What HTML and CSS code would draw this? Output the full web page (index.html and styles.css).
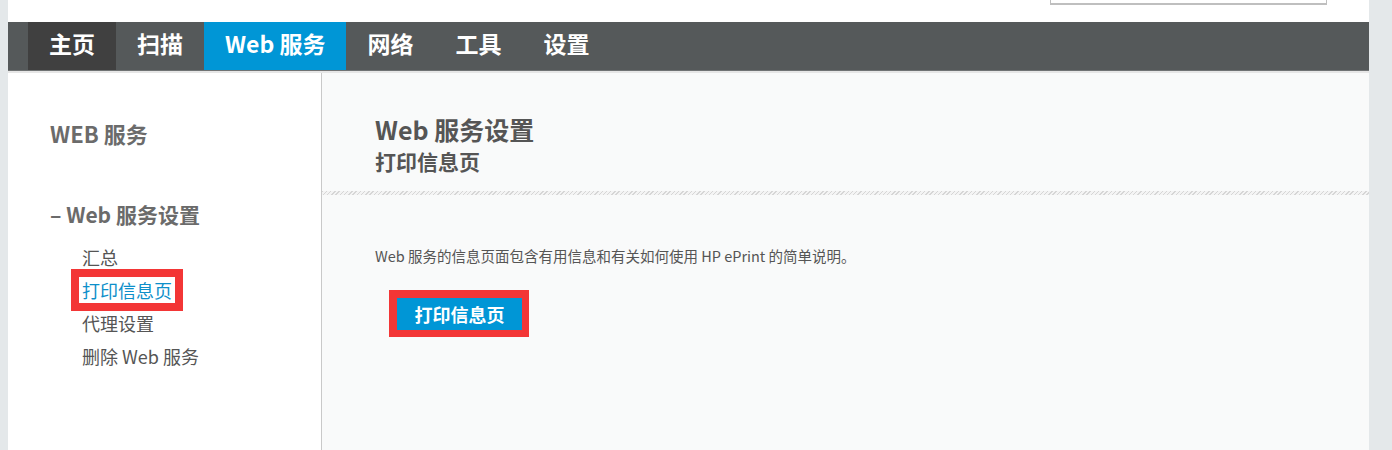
FILE: index.html
```html
<!DOCTYPE html>
<html lang="zh-CN">
<head>
  <meta charset="UTF-8">
  <title>Web 服务 - 打印信息页</title>
  <link rel="stylesheet" href="styles.css">
</head>
<body>
  <div class="page">
    <div class="topbar">
      <div class="search"></div>
    </div>

    <ul class="nav">
      <li class="nav-home">主页</li>
      <li>扫描</li>
      <li class="active">Web 服务</li>
      <li>网络</li>
      <li>工具</li>
      <li>设置</li>
    </ul>

    <div class="content">
      <div class="sidebar">
        <h2>WEB 服务</h2>
        <h3>– Web 服务设置</h3>
        <ul class="subnav">
          <li>汇总</li>
          <li><span class="current marked">打印信息页</span></li>
          <li>代理设置</li>
          <li>删除 Web 服务</li>
        </ul>
      </div>

      <div class="main">
        <div class="main-header">
          <h1>Web 服务设置</h1>
          <h4>打印信息页</h4>
        </div>
        <div class="divider"></div>
        <div class="main-body">
          <p>Web 服务的信息页面包含有用信息和有关如何使用 HP ePrint 的简单说明。</p>
          <div class="btn-mark">
            <button>打印信息页</button>
          </div>
        </div>
      </div>
    </div>
  </div>
</body>
</html>
```

FILE: styles.css
```css
body {
  margin: 0;
  background: #e4e8ea;
  font-family: "Noto Sans CJK SC", sans-serif;
  color: #555;
}
.page {
  width: 1361px;
  margin-left: 8px;
  height: 450px;
  background: #f9fafa;
  display: flex;
  flex-direction: column;
}
.topbar {
  height: 22px;
  background: #fff;
  display: flex;
  justify-content: flex-end;
  align-items: flex-end;
  overflow: hidden;
}
.search {
  width: 275px;
  height: 30px;
  margin: 0 42px 17px 0;
  border: 1px solid #bfbfbf;
  border-bottom-width: 2px;
  flex-shrink: 0;
}
.nav {
  list-style: none;
  margin: 0;
  padding: 0 0 0 20px;
  display: flex;
  height: 48px;
  background: #55595a;
  border-bottom: 1px solid #707374;
  box-shadow: 0 2px 0 #e6e6e6;
}
.nav li {
  padding: 0 21px 6px;
  line-height: 42px;
  font-size: 23px;
  font-weight: bold;
  color: #fff;
}
.nav .nav-home {
  background: #404040;
}
.nav .active {
  background: #0096d6;
}
.content {
  flex: 1;
  display: flex;
  margin-top: 2px;
}
.sidebar {
  width: 314px;
  background: #fff;
  border-right: 1px solid #c9c9c9;
  padding: 45px 0 0 42px;
  box-sizing: border-box;
}
.sidebar h2 {
  margin: 0;
  font-size: 22px;
  line-height: 30px;
  color: #6b6b6b;
}
.sidebar h3 {
  margin: 51px 0 0;
  font-size: 21px;
  line-height: 30px;
  color: #6b6b6b;
}
.subnav {
  list-style: none;
  margin: 12px 0 0;
  padding: 0 0 0 32px;
}
.subnav li {
  font-size: 18px;
  line-height: 33px;
  color: #555;
}
.subnav .current {
  color: #0d8fca;
}
.marked {
  border: 8px solid #f33636;
  padding: 0 3px;
  margin-left: -11px;
  background: #fff;
}
.main {
  flex: 1;
  display: flex;
  flex-direction: column;
}
.main-header {
  padding: 40px 0 16px 53px;
}
.main-header h1 {
  margin: 0;
  font-size: 25px;
  line-height: 32px;
  color: #555;
}
.main-header h4 {
  margin: 2px 0 0;
  font-size: 21px;
  line-height: 28px;
  color: #555;
}
.divider {
  height: 4px;
  background: repeating-linear-gradient(135deg, #d6d6d6 0 1px, #f4f4f4 1px 3px);
}
.main-body {
  padding: 49px 0 0 53px;
}
.main-body p {
  margin: 0;
  font-size: 14.5px;
  line-height: 24px;
  color: #555;
}
.btn-mark {
  display: inline-block;
  margin: 22px 0 0 14px;
  border: 8px solid #f33636;
  border-right-width: 7px;
  border-bottom-width: 7px;
}
.btn-mark button {
  display: block;
  width: 125px;
  height: 32px;
  border: none;
  background: #0096d6;
  color: #fff;
  font-family: "Noto Sans CJK SC", sans-serif;
  font-size: 18px;
  font-weight: bold;
  padding: 0;
}
```
